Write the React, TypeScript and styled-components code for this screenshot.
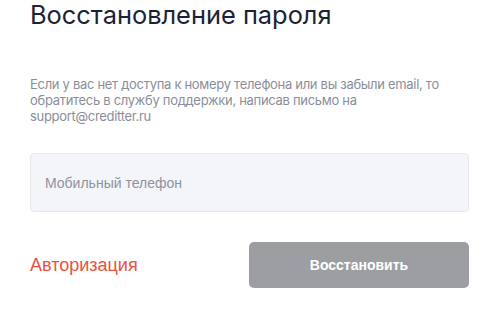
import React, { useState } from "react";
import styled, { createGlobalStyle } from "styled-components";

const GlobalStyle = createGlobalStyle`
  html, body {
    margin: 0;
    padding: 0;
    background: #ffffff;
  }
  * {
    box-sizing: border-box;
  }
`;

const App = () => {
  const [phone, setPhone] = useState("");

  return (
    <>
      <GlobalStyle />
      <Page>
        <Title>Восстановление пароля</Title>
        <Description>
          Если у вас нет доступа к номеру телефона или вы забыли email, то
          обратитесь в службу поддержки, написав письмо на
          support@creditter.ru
        </Description>
        <PhoneInput
          type="tel"
          placeholder="Мобильный телефон"
          value={phone}
          onChange={(e) => setPhone(e.target.value)}
        />
        <Actions>
          <AuthLink href="#">Авторизация</AuthLink>
          <SubmitButton type="button" disabled={!phone}>
            Восстановить
          </SubmitButton>
        </Actions>
      </Page>
    </>
  );
};

export default App;

const Page = styled.div`
  width: 469px;
  padding-left: 30px;
  display: flex;
  flex-direction: column;
`;

const Title = styled.h1`
  margin: 0;
  font-family: Inter, "Noto Sans", sans-serif;
  font-weight: 400;
  font-size: 25.4px;
  line-height: 30px;
  color: #1b2236;
`;

const Description = styled.p`
  margin: 46px 0 0;
  width: 415px;
  font-family: Inter, "Noto Sans", sans-serif;
  font-size: 13px;
  letter-spacing: -0.3px;
  line-height: 16px;
  color: #8a8e99;
`;

const PhoneInput = styled.input`
  margin-top: 29px;
  width: 100%;
  height: 59px;
  padding: 0 15px 0 14px;
  border: 1px solid #e8e9ee;
  border-radius: 4px;
  background: #f4f5f9;
  font-family: "Liberation Sans", Arial, sans-serif;
  font-size: 14px;
  color: #1b2236;
  outline: none;

  &::placeholder {
    color: #8e929e;
  }
`;

const Actions = styled.div`
  margin-top: 30px;
  display: flex;
  align-items: center;
  justify-content: space-between;
`;

const AuthLink = styled.a`
  font-family: "Liberation Sans", Arial, sans-serif;
  font-size: 18px;
  color: #e8533f;
  text-decoration: none;
`;

const SubmitButton = styled.button`
  width: 220px;
  height: 46px;
  border: none;
  border-radius: 5px;
  background: #9c9ea1;
  color: #ffffff;
  font-family: "Liberation Sans", Arial, sans-serif;
  font-weight: 700;
  font-size: 14px;
  cursor: pointer;
`;
